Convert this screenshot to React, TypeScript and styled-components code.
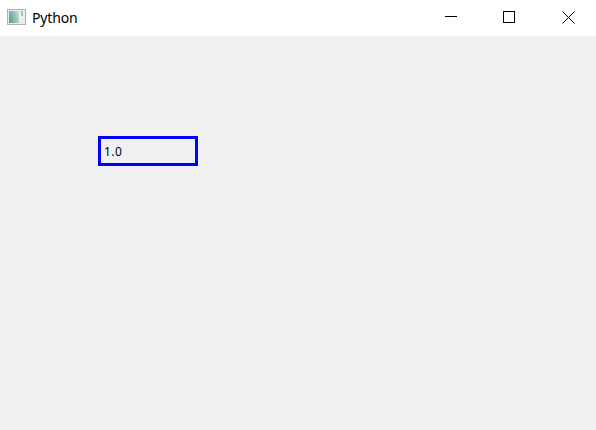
import React from "react";
import styled, {createGlobalStyle} from "styled-components";

const GlobalStyle = createGlobalStyle`
  html, body {
    margin: 0;
    padding: 0;
    background: #f0f0f0;
  }
`

const AppIcon = () => (
    <svg width="19" height="16" viewBox="0 0 19 16">
        <defs>
            <linearGradient id="pane" x1="0" y1="0" x2="0" y2="1">
                <stop offset="0" stopColor="#7fa9c0"/>
                <stop offset="1" stopColor="#4f9a7c"/>
            </linearGradient>
            <linearGradient id="fade" x1="0" y1="0" x2="1" y2="0">
                <stop offset="0" stopColor="#ffffff" stopOpacity="0"/>
                <stop offset="1" stopColor="#ffffff" stopOpacity="0.55"/>
            </linearGradient>
        </defs>
        <rect x="0.5" y="0.5" width="18" height="15" fill="#eeeeee" stroke="#b0b0b0"/>
        <rect x="2" y="2" width="10" height="12" fill="url(#pane)"/>
        <rect x="2" y="2" width="10" height="12" fill="url(#fade)"/>
        <rect x="14" y="2" width="2" height="5" fill="#a9c2bc"/>
    </svg>
);

const App: React.FC = () => {
    return (
        <Window>
            <GlobalStyle/>
            <TitleBar>
                <IconSlot><AppIcon/></IconSlot>
                <Title>Python</Title>
                <Controls>
                    <ControlButton>
                        <svg width="12" height="12" viewBox="0 0 12 12">
                            <path d="M0 5.5H12" stroke="#000" strokeWidth="1"/>
                        </svg>
                    </ControlButton>
                    <ControlButton>
                        <svg width="12" height="12" viewBox="0 0 12 12">
                            <rect x="0.5" y="0.5" width="11" height="11" fill="none" stroke="#000"/>
                        </svg>
                    </ControlButton>
                    <CloseButton>
                        <svg width="13" height="13" viewBox="0 0 13 13">
                            <path d="M0.5 0.5L12.5 12.5M12.5 0.5L0.5 12.5" stroke="#000" strokeWidth="1"/>
                        </svg>
                    </CloseButton>
                </Controls>
            </TitleBar>
            <Content>
                <ValueField>1.0</ValueField>
            </Content>
        </Window>
    );
}

const Window = styled.div`
  display: flex;
  flex-direction: column;
  width: 596px;
  height: 430px;
  overflow: hidden;
  background: #f0f0f0;
`

const TitleBar = styled.div`
  box-sizing: border-box;
  display: flex;
  align-items: center;
  flex-shrink: 0;
  height: 36px;
  padding-bottom: 2px;
  background: #ffffff;
`

const IconSlot = styled.div`
  display: flex;
  margin-left: 7px;
  margin-right: 6px;
`

const Title = styled.div`
  font-family: "Noto Sans", "Open Sans", sans-serif;
  font-size: 14px;
  letter-spacing: -0.15px;
  color: #000000;
`

const Controls = styled.div`
  display: flex;
  margin-left: auto;
  margin-right: -2px;
`

const ControlButton = styled.div`
  display: flex;
  align-items: center;
  justify-content: center;
  width: 58px;
  height: 34px;
`

const CloseButton = styled(ControlButton)`
  width: 60px;
`

const Content = styled.div`
  flex: 1;
  padding: 100px 0 0 98px;
`

const ValueField = styled.div`
  box-sizing: border-box;
  display: flex;
  align-items: center;
  width: 100px;
  height: 30px;
  padding-left: 3px;
  border: 3px solid #0000ff;
  font-family: "Noto Sans", "Open Sans", sans-serif;
  font-size: 12px;
  letter-spacing: 0.4px;
  color: #000000;
`

export default App;
